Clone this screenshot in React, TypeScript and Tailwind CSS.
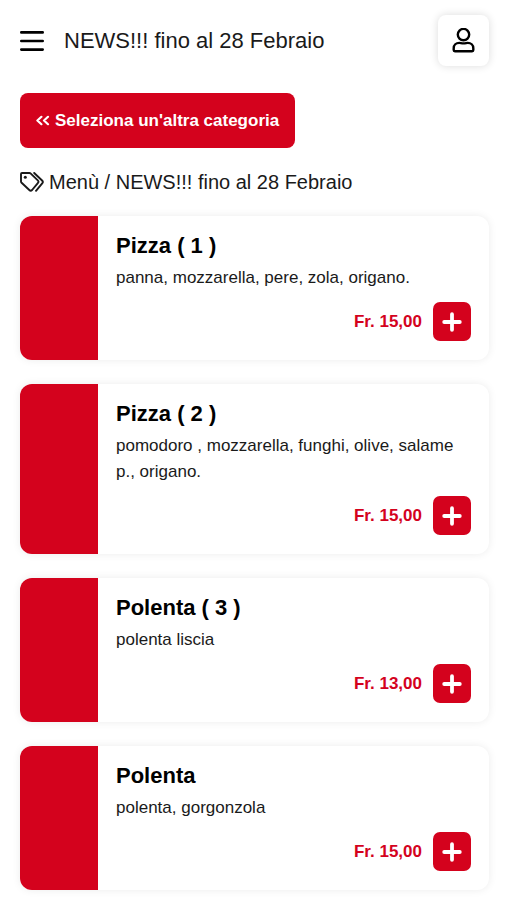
type Dish = { name: string; ingredients: string; price: string };

const dishes: Dish[] = [
  { name: "Pizza ( 1 )", ingredients: "panna, mozzarella, pere, zola, origano.", price: "Fr. 15,00" },
  { name: "Pizza ( 2 )", ingredients: "pomodoro , mozzarella, funghi, olive, salame p., origano.", price: "Fr. 15,00" },
  { name: "Polenta ( 3 )", ingredients: "polenta liscia", price: "Fr. 13,00" },
  { name: "Polenta", ingredients: "polenta, gorgonzola", price: "Fr. 15,00" },
];

function BarsIcon() {
  return (
    <svg className="h-6 w-6" viewBox="0 0 24 24" fill="none" stroke="currentColor" strokeWidth="2.6" strokeLinecap="round" aria-hidden="true">
      <path d="M1.3 3.4h21.4M1.3 12h21.4M1.3 20.6h21.4" />
    </svg>
  );
}

function UserIcon() {
  return (
    <svg className="h-[26px] w-6" viewBox="0 0 24 26" fill="none" stroke="currentColor" strokeWidth="2.4" strokeLinecap="round" strokeLinejoin="round" aria-hidden="true">
      <circle cx="11.500" cy="6.600" r="5.700" />
      <path d="M7.300 14.900c1.200 0 2.200.5 4.200.5s3-.5 4.200-.5c3.200 0 5.600 2.400 5.600 5.400v1.800c0 .7-.5 1.200-1.200 1.200H2.900c-.7 0-1.200-.5-1.200-1.200v-1.800c0-3 2.400-5.400 5.600-5.400Z" />
    </svg>
  );
}

function DoubleLeftIcon() {
  return (
    <svg className="h-4 w-4 shrink-0" viewBox="0 0 16 16" fill="none" stroke="currentColor" strokeWidth="2.2" strokeLinecap="round" strokeLinejoin="round" aria-hidden="true">
      <path d="M5.400 3.800 1.400 7.500l4 3.700M12 3.800 8 7.500l4 3.700" />
    </svg>
  );
}

function TagsIcon() {
  return (
    <svg className="h-5 w-6 shrink-0" viewBox="0 0 24 20" fill="none" stroke="currentColor" strokeWidth="1.9" strokeLinecap="round" strokeLinejoin="round" aria-hidden="true">
      <path d="M2 1h7.400c.5 0 1 .2 1.400.6l7 6.800c.8.8.8 1.900 0 2.700l-5.700 6.900c-.8.8-2 .8-2.800 0L1.600 10.800C1.200 10.400 1 9.900 1 9.400V2c0-.6.4-1 1-1Z" />
      <path d="m14.200 1 7.900 7.500c.9.900.9 2 .1 2.900L16 18.800" />
      <circle cx="5.300" cy="5.300" r="1.500" fill="currentColor" stroke="none" />
    </svg>
  );
}

function PlusIcon() {
  return (
    <svg className="h-5 w-5" viewBox="0 0 20 20" fill="none" stroke="currentColor" strokeWidth="3.8" strokeLinecap="round" aria-hidden="true">
      <path d="M10 2.200v15.600M2.200 10h15.600" />
    </svg>
  );
}

function DishCard({ dish }: { dish: Dish }) {
  return (
    <li className="flex overflow-hidden rounded-xl bg-white shadow-[0_0_8px_rgba(0,0,0,0.08)]">
      <div className="w-[78px] shrink-0 bg-[#d4021d]" />
      <div className="flex-1 px-[18px] pt-[15px] pb-[19px]">
        <h2 className="text-[22px] leading-[30px] font-bold text-black">{dish.name}</h2>
        <p className="mt-1 text-[17px] leading-[26px]">{dish.ingredients}</p>
        <div className="mt-[11px] flex items-center justify-end gap-[11px]">
          <span className="text-[17px] leading-[26px] font-bold text-[#d4021d]">{dish.price}</span>
          <button
            type="button"
            aria-label={`Aggiungi ${dish.name}`}
            className="flex h-[39px] w-[38px] items-center justify-center rounded-[7px] bg-[#d4021d] text-white"
          >
            <PlusIcon />
          </button>
        </div>
      </div>
    </li>
  );
}

export default function App() {
  return (
    <div className="min-h-screen bg-white pr-[18px] pb-2 pl-5 font-['Liberation_Sans',Arial,sans-serif] text-[#1a1a1a]">
      <header className="flex items-center pt-[15px]">
        <button type="button" aria-label="Apri menu" className="shrink-0 text-black">
          <BarsIcon />
        </button>
        <h1 className="ml-5 flex-1 text-[22px] leading-[30px]">NEWS!!! fino al 28 Febraio</h1>
        <button
          type="button"
          aria-label="Profilo"
          className="flex h-[51px] w-[51px] shrink-0 items-center justify-center rounded-lg bg-white text-black shadow-[0_0_8px_rgba(0,0,0,0.14)]"
        >
          <UserIcon />
        </button>
      </header>

      <main>
        <button
          type="button"
          className="mt-[27px] flex h-[55px] items-center gap-[3px] rounded-lg bg-[#d4021d] px-4 text-[17px] leading-[26px] font-bold text-white"
        >
          <DoubleLeftIcon />
          Seleziona un'altra categoria
        </button>

        <nav aria-label="Percorso" className="mt-[19px] flex items-center gap-[5px] text-[20px] leading-[30px]">
          <TagsIcon />
          <span>Menù / NEWS!!! fino al 28 Febraio</span>
        </nav>

        <ul className="mt-[19px] flex flex-col gap-6">
          {dishes.map((dish) => (
            <DishCard key={dish.name} dish={dish} />
          ))}
        </ul>
      </main>
    </div>
  );
}
